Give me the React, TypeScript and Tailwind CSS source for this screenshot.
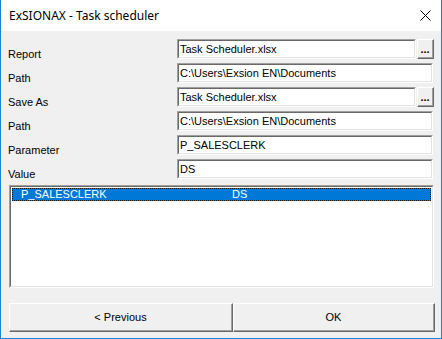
import React from "react";

const font = { fontFamily: '"Liberation Sans", Arial, sans-serif' };

function Field({ value, width }: { value: string; width: string }) {
  return (
    <div className={`${width} h-[20px] border-t border-l border-t-[#a0a0a0] border-l-[#a0a0a0] border-r border-b border-r-white border-b-white`}>
      <div className="h-full border-t border-l border-t-[#696969] border-l-[#696969] border-r border-b border-r-[#e3e3e3] border-b-[#e3e3e3] bg-white pl-[1px] text-[11px] leading-[16px] text-black whitespace-nowrap overflow-hidden">
        {value}
      </div>
    </div>
  );
}

function Ellipsis() {
  return (
    <div className="w-[17px] h-[20px] border-t border-l border-t-white border-l-white border-r border-b border-r-[#696969] border-b-[#696969]">
      <div className="h-full border-r border-b border-r-[#a0a0a0] border-b-[#a0a0a0] bg-[#f0f0f0] flex items-center justify-center">
        <span className="text-[11px] font-bold leading-none text-black mt-[2px]">...</span>
      </div>
    </div>
  );
}

function Row({ label, value, button }: { label: string; value: string; button?: boolean }) {
  return (
    <div className="flex h-[20px]">
      <div className="w-[176px] pl-[7px] pt-[9px] text-[11px] leading-[13px] text-black whitespace-nowrap">{label}</div>
      <div className="flex gap-[1px]">
        {button ? (
          <>
            <Field value={value} width="w-[239px]" />
            <Ellipsis />
          </>
        ) : (
          <Field value={value} width="w-[256px]" />
        )}
      </div>
    </div>
  );
}

function Btn({ label, width }: { label: string; width: string }) {
  return (
    <div className={`${width} h-[29px] border-t border-l border-t-white border-l-white border-r border-b border-r-[#696969] border-b-[#696969]`}>
      <div className="h-full border-r border-b border-r-[#a0a0a0] border-b-[#a0a0a0] bg-[#f0f0f0] flex items-center justify-center text-[11px] text-black">
        {label}
      </div>
    </div>
  );
}

export default function App() {
  return (
    <div style={font} className="w-[442px] h-[339px] bg-[#f0f0f0] border-l border-r border-b border-[#1883d7] flex flex-col overflow-hidden">
      <div className="h-[31px] bg-white flex items-center justify-between pl-[8px] pr-[9px] shrink-0">
        <span className="text-[12px] text-black" style={{ fontFamily: '"Noto Sans", "Open Sans", sans-serif' }}>
          ExSIONAX - Task scheduler
        </span>
        <svg width="11" height="11" viewBox="0 0 11 11" className="mr-[1px]">
          <path d="M0.5 0.5 L10.5 10.5 M10.5 0.5 L0.5 10.5" stroke="#000" strokeWidth="1" fill="none" />
        </svg>
      </div>
      <div className="flex flex-col gap-[4px] pt-[8px]">
        <Row label="Report" value="Task Scheduler.xlsx" button />
        <Row label="Path" value="C:\Users\Exsion EN\Documents" />
        <Row label="Save As" value="Task Scheduler.xlsx" button />
        <Row label="Path" value="C:\Users\Exsion EN\Documents" />
        <Row label="Parameter" value="P_SALESCLERK" />
        <Row label="Value" value="DS" />
      </div>
      <div className="mt-[6px] ml-[8px] w-[425px] h-[103px] border-t border-l border-t-[#a0a0a0] border-l-[#a0a0a0] border-r border-b border-r-white border-b-white">
        <div className="h-full border-t border-l border-t-[#696969] border-l-[#696969] border-r border-b border-r-[#e3e3e3] border-b-[#e3e3e3] bg-white pt-[1px] px-[1px]">
          <div className="h-[13px] bg-[#0078d7] border border-dotted border-[#1a1a1a] flex items-center text-white text-[11px] leading-[11px] overflow-hidden">
            <span className="pl-[8px] w-[219px]">P_SALESCLERK</span>
            <span>DS</span>
          </div>
        </div>
      </div>
      <div className="flex mt-[15px] ml-[8px]">
        <Btn label="< Previous" width="w-[224px]" />
        <Btn label="OK" width="w-[202px]" />
      </div>
    </div>
  );
}
